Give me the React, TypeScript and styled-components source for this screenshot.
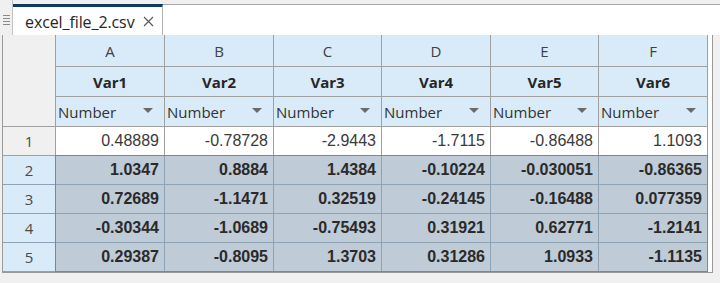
import React from "react";
import styled, { createGlobalStyle } from "styled-components";

const GlobalStyle = createGlobalStyle`
  html, body { margin: 0; padding: 0; }
  body {
    background: #f0f0f0;
    width: 720px;
    height: 283px;
    overflow: hidden;
  }
`;

const UI = `"Open Sans", "Noto Sans", sans-serif`;
const NUM = `"Liberation Sans", Arial, sans-serif`;

const Window = styled.div`
  display: flex;
  flex-direction: column;
`;

const TabRow = styled.div`
  display: flex;
  height: 35px;
`;

const Grip = styled.div`
  width: 13px;
  box-sizing: border-box;
  border-right: 1px solid #c4c4c4;
  background: #f0f0f0;
  display: flex;
  align-items: flex-start;
  justify-content: center;
  padding-top: 14px;
`;

const Tab = styled.div`
  margin-top: 4px;
  width: 150px;
  box-sizing: border-box;
  background: #ffffff;
  border-top: 3px solid #0e3b63;
  border-right: 1px solid #b4b4b4;
  display: flex;
  align-items: center;
  padding: 1px 0 0 12px;
  gap: 8px;
  font-family: ${UI};
  font-size: 16px;
  letter-spacing: -0.1px;
  color: #262626;
`;

const Filler = styled.div`
  flex: 1;
  margin-top: 4px;
  background: #ffffff;
  border-top: 1px solid #a8a8a8;
`;

const Panel = styled.div`
  margin-left: 2px;
  width: 711px;
  box-sizing: border-box;
  background: #ffffff;
  border-left: 1px solid #9a9a9a;
  border-right: 1px solid #9a9a9a;
  border-bottom: 1px solid #9a9a9a;
  height: 238px;
`;

const Grid = styled.div`
  position: relative;
  display: grid;
  grid-template-columns: 53px 109px 109px 108px 109px 108px 109px;
  grid-template-rows: 32px 30px 30px repeat(5, 29px);
`;

const Corner = styled.div`
  grid-row: 1 / span 3;
  background: #f0f0f0;
  border-right: 1px solid #a0a0a0;
  border-bottom: 1px solid #a0a0a0;
  box-sizing: border-box;
`;

const Head = styled.div<{ $bold?: boolean }>`
  box-sizing: border-box;
  background: #d9eaf8;
  border-right: 1px solid #a0a0a0;
  border-bottom: 1px solid #a0a0a0;
  display: flex;
  align-items: center;
  justify-content: center;
  font-family: ${UI};
  font-size: 15px;
  font-weight: ${(p) => (p.$bold ? 700 : 400)};
  color: ${(p) => (p.$bold ? "#262626" : "#404040")};
`;

const TypeCell = styled.div`
  box-sizing: border-box;
  background: #d9eaf8;
  border-right: 1px solid #a0a0a0;
  border-bottom: 1px solid #a0a0a0;
  display: flex;
  align-items: center;
  justify-content: space-between;
  padding: 0 11px 0 2px;
  font-family: ${UI};
  font-size: 15px;
  color: #333333;
`;

const Caret = styled.span`
  width: 0;
  height: 0;
  border-left: 5px solid transparent;
  border-right: 5px solid transparent;
  border-top: 5px solid #6a6a6a;
  margin-top: -2px;
`;

const RowHead = styled.div<{ $sel?: boolean }>`
  box-sizing: border-box;
  background: ${(p) => (p.$sel ? "#d9eaf8" : "#f0f0f0")};
  border-right: 1px solid ${(p) => (p.$sel ? "#7d94a8" : "#a0a0a0")};
  border-bottom: 1px solid ${(p) => (p.$sel ? "#8da2b4" : "#a0a0a0")};
  display: flex;
  align-items: center;
  justify-content: center;
  font-family: ${UI};
  font-size: 15px;
  color: #4a4a4a;
`;

const Cell = styled.div<{ $sel?: boolean }>`
  box-sizing: border-box;
  background: ${(p) => (p.$sel ? "#bfcbd6" : "#ffffff")};
  border-right: 1px solid ${(p) => (p.$sel ? "#8da2b4" : "#a0a0a0")};
  border-bottom: 1px solid ${(p) => (p.$sel ? "#8da2b4" : "#a0a0a0")};
  display: flex;
  align-items: center;
  justify-content: flex-end;
  padding-right: 5px;
  font-family: ${NUM};
  font-size: 16px;
  font-weight: ${(p) => (p.$sel ? 700 : 400)};
  color: ${(p) => (p.$sel ? "#2a2a2a" : "#3a3a3a")};
`;

const Selection = styled.div`
  position: absolute;
  left: 52px;
  top: 120px;
  width: 653px;
  height: 117px;
  box-sizing: border-box;
  border: 1px solid #6f8aa2;
  pointer-events: none;
`;

const GripIcon = () => (
  <svg width="7" height="12" viewBox="0 0 7 12">
    {[0, 3, 6, 9].map((y) => (
      <rect key={y} x="0" y={y + 1} width="7" height="1" fill="#8a8a8a" />
    ))}
  </svg>
);

const CloseIcon = () => (
  <svg width="11" height="11" viewBox="0 0 11 11">
    <path d="M1 1 L10 10 M10 1 L1 10" stroke="#5a5a5a" strokeWidth="1.2" fill="none" />
  </svg>
);

const cols = ["A", "B", "C", "D", "E", "F"];
const rows = [
  ["0.48889", "-0.78728", "-2.9443", "-1.7115", "-0.86488", "1.1093"],
  ["1.0347", "0.8884", "1.4384", "-0.10224", "-0.030051", "-0.86365"],
  ["0.72689", "-1.1471", "0.32519", "-0.24145", "-0.16488", "0.077359"],
  ["-0.30344", "-1.0689", "-0.75493", "0.31921", "0.62771", "-1.2141"],
  ["0.29387", "-0.8095", "1.3703", "0.31286", "1.0933", "-1.1135"],
];

export default function App() {
  return (
    <>
      <GlobalStyle />
      <Window>
        <TabRow>
          <Grip>
            <GripIcon />
          </Grip>
          <Tab>
            <span>excel_file_2.csv</span>
            <CloseIcon />
          </Tab>
          <Filler />
        </TabRow>
        <Panel>
          <Grid>
            <Corner />
            {cols.map((c) => (
              <Head key={c}>{c}</Head>
            ))}
            {cols.map((c, i) => (
              <Head key={c} $bold>
                Var{i + 1}
              </Head>
            ))}
            {cols.map((c) => (
              <TypeCell key={c}>
                <span>Number</span>
                <Caret />
              </TypeCell>
            ))}
            {rows.map((r, ri) => (
              <React.Fragment key={ri}>
                <RowHead $sel={ri > 0}>{ri + 1}</RowHead>
                {r.map((v, ci) => (
                  <Cell key={ci} $sel={ri > 0}>
                    {v}
                  </Cell>
                ))}
              </React.Fragment>
            ))}
            <Selection />
          </Grid>
        </Panel>
      </Window>
    </>
  );
}
